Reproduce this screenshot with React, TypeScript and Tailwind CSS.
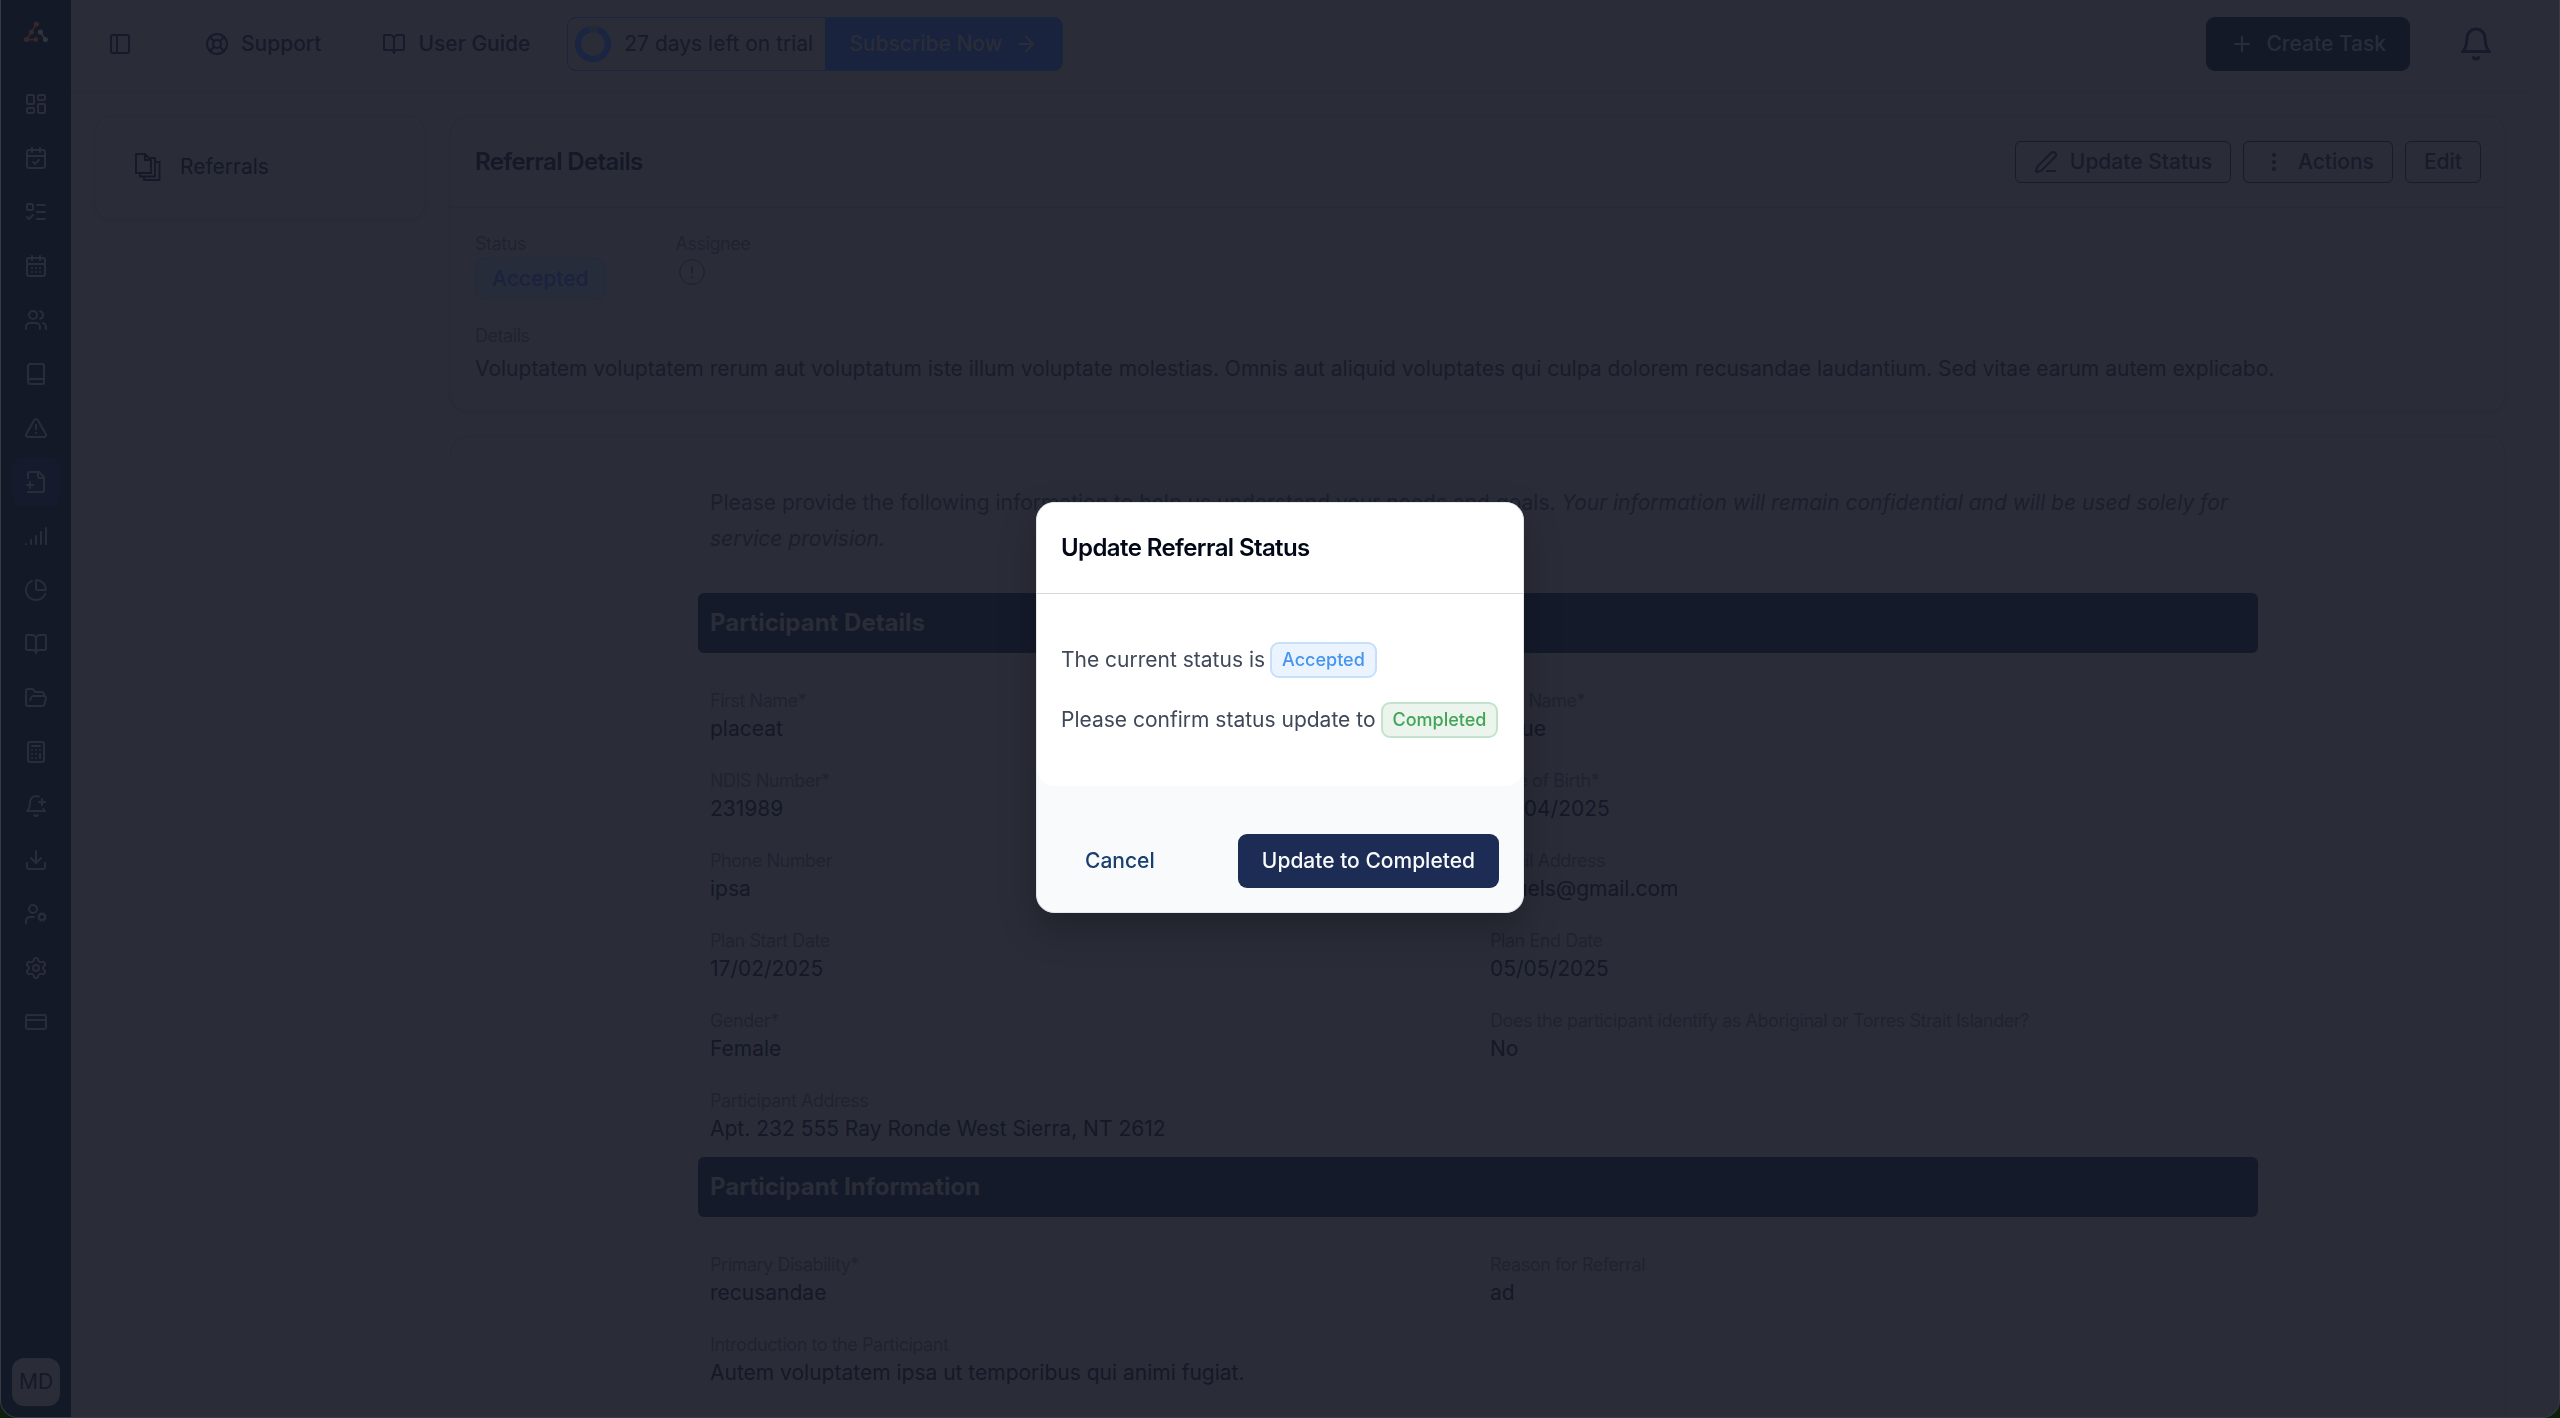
import {
	ArrowRight,
	Book,
	BookOpen,
	Calculator,
	CalendarCheck,
	CalendarDays,
	ChartPie,
	CreditCard,
	Download,
	EllipsisVertical,
	FolderOpen,
	LayoutDashboard,
	LifeBuoy,
	ListTodo,
	PanelLeft,
	PenLine,
	Plus,
	Settings,
	Signal,
	TriangleAlert,
	UserCog,
	Users,
} from "lucide-react";
import type { ReactNode, SVGProps } from "react";

function LineIcon({ children, ...props }: SVGProps<SVGSVGElement>) {
	return (
		<svg
			viewBox="0 0 24 24"
			fill="none"
			stroke="currentColor"
			strokeWidth="2"
			strokeLinecap="round"
			strokeLinejoin="round"
			aria-hidden="true"
			{...props}
		>
			{children}
		</svg>
	);
}

function BellIcon({ className }: { className?: string }) {
	return (
		<LineIcon className={className}>
			<path d="M6 8a6 6 0 0 1 12 0c0 7 3 9 3 9H3s3-2 3-9" />
			<path d="M10.3 21a1.94 1.94 0 0 0 3.4 0" />
		</LineIcon>
	);
}

function BellPlusIcon({ className }: { className?: string }) {
	return (
		<LineIcon className={className}>
			<path d="M19.3 14.8C20.1 16.4 21 17 21 17H3s3-2 3-9c0-3.3 2.7-6 6-6 1 0 1.9.2 2.8.7" />
			<path d="M10.3 21a1.94 1.94 0 0 0 3.4 0" />
			<path d="M15 8h6" />
			<path d="M18 5v6" />
		</LineIcon>
	);
}

function FilePlusIcon({ className }: { className?: string }) {
	return (
		<LineIcon className={className}>
			<path d="M4 22h14a2 2 0 0 0 2-2V7l-5-5H6a2 2 0 0 0-2 2v4" />
			<path d="M14 2v4a2 2 0 0 0 2 2h4" />
			<path d="M3 15h6" />
			<path d="M6 12v6" />
		</LineIcon>
	);
}

function StackedFilesIcon() {
	return (
		<svg
			className="h-7 w-[26px]"
			viewBox="0 0 26 28"
			fill="none"
			stroke="currentColor"
			strokeWidth="1.8"
			aria-hidden="true"
		>
			<path d="M1 1h9l6 6v13H1z" />
			<path d="M10 1v6h6" />
			<path d="M5 20v3.5h15V5h-5" />
			<path d="M9 23.5V27h15.5V9H20" />
		</svg>
	);
}

function Logo() {
	return (
		<svg className="size-6" viewBox="0 0 24 24" aria-hidden="true">
			<g fill="#35282c" stroke="#35282c" strokeWidth="1.6">
				<path d="M12.4 4 7.4 12 2.6 19.6h9" fill="none" />
				<circle cx="12.4" cy="4" r="1.8" />
				<circle cx="7.4" cy="12" r="1.8" />
				<circle cx="2.4" cy="19.5" r="1.8" />
				<circle cx="11.8" cy="19.4" r="1.5" />
			</g>
			<g fill="#30343f" stroke="#30343f" strokeWidth="1.6">
				<path d="m16.4 12 5 7.6" />
				<circle cx="16.4" cy="12" r="1.8" />
				<circle cx="21.4" cy="19.6" r="1.8" />
			</g>
		</svg>
	);
}

const navItems = [
	{ label: "Dashboard", icon: LayoutDashboard },
	{ label: "Roster", icon: CalendarCheck },
	{ label: "Tasks", icon: ListTodo },
	{ label: "Calendar", icon: CalendarDays },
	{ label: "Participants", icon: Users },
	{ label: "Progress notes", icon: Book },
	{ label: "Incidents", icon: TriangleAlert },
	{ label: "Referrals", icon: FilePlusIcon, active: true },
	{ label: "Activity", icon: Signal },
	{ label: "Reports", icon: ChartPie },
	{ label: "Library", icon: BookOpen },
	{ label: "Files", icon: FolderOpen },
	{ label: "Billing", icon: Calculator },
	{ label: "Reminders", icon: BellPlusIcon },
	{ label: "Downloads", icon: Download },
	{ label: "Staff", icon: UserCog },
	{ label: "Settings", icon: Settings },
	{ label: "Subscription", icon: CreditCard },
];

const participantDetails = [
	["First Name*", "placeat"],
	["Last Name*", "atque"],
	["NDIS Number*", "231989"],
	["Date of Birth*", "08/04/2025"],
	["Phone Number", "ipsa"],
	["Email Address", "deuels@gmail.com"],
	["Plan Start Date", "17/02/2025"],
	["Plan End Date", "05/05/2025"],
	["Gender*", "Female"],
	["Does the participant identify as Aboriginal or Torres Strait Islander?", "No"],
];

function Sidebar() {
	return (
		<aside className="flex w-[70px] shrink-0 flex-col items-center bg-[#141928] pt-5 pb-[11px] text-[#2a2d38]">
			<Logo />
			<nav className="mt-9 flex flex-col gap-[6px]">
				{navItems.map(({ label, icon: Icon, active }) => (
					<a
						key={label}
						href="#"
						aria-label={label}
						className={`grid size-12 place-items-center rounded-[9px] ${active ? "bg-[#151a2c]" : ""}`}
					>
						<Icon className="size-6" />
					</a>
				))}
			</nav>
			<button
				type="button"
				className="mt-auto size-12 rounded-xl bg-[#2a2d38] text-[#151928]"
			>
				MD
			</button>
		</aside>
	);
}

function TopBar() {
	return (
		<header className="flex items-center justify-between border-b border-[#282b36] pt-[17px] pr-9 pb-[21px] pl-[37px] text-[#161a2a]">
			<div className="flex items-center gap-[13px]">
				<button type="button" aria-label="Toggle sidebar" className="mr-9">
					<PanelLeft className="size-6" />
				</button>
				<a
					href="#"
					className="flex h-[54px] items-center gap-3 rounded-[9px] border border-[#292c37] px-[23px] font-medium"
				>
					<LifeBuoy className="size-6" />
					Support
				</a>
				<a
					href="#"
					className="flex h-[54px] items-center gap-3 rounded-[9px] border border-[#292c37] px-[23px] font-medium"
				>
					<BookOpen className="size-6" />
					User Guide
				</a>
				<div className="flex h-[54px] overflow-hidden rounded-[9px] border border-[#1a2542]">
					<div className="flex items-center gap-3 pr-3 pl-[6px]">
						<svg className="size-[38px]" viewBox="0 0 38 38" fill="none" aria-hidden="true">
							<circle cx="19" cy="19" r="15" stroke="#242936" strokeWidth="6" />
							<circle
								cx="19"
								cy="19"
								r="15"
								stroke="#1a2542"
								strokeWidth="6"
								strokeDasharray="85 10"
								transform="rotate(-72 19 19)"
							/>
						</svg>
						27 days left on trial
					</div>
					<button
						type="button"
						className="flex items-center gap-3 bg-[#19233d] px-6 font-medium text-[#2a2d38]"
					>
						Subscribe Now
						<ArrowRight className="size-6" />
					</button>
				</div>
			</div>
			<div className="flex items-center gap-12">
				<button
					type="button"
					className="flex h-[54px] items-center gap-3 rounded-[9px] bg-[#141928] px-6 font-medium text-[#2a2d38]"
				>
					<Plus className="size-6" />
					Create Task
				</button>
				<button type="button" aria-label="Notifications">
					<BellIcon className="size-9" />
				</button>
			</div>
		</header>
	);
}

function OutlineButton({ children }: { children: ReactNode }) {
	return (
		<button
			type="button"
			className="flex h-[42px] items-center gap-3 rounded-md border border-[#171b2a] px-[18px] font-medium text-[#171b2a]"
		>
			{children}
		</button>
	);
}

function Label({ children }: { children: ReactNode }) {
	return (
		<div className="text-[18px] leading-6 tracking-tight text-[#1f2330]">{children}</div>
	);
}

function Field({ label, value }: { label: string; value: string }) {
	return (
		<div>
			<Label>{label}</Label>
			<div className="leading-8">{value}</div>
		</div>
	);
}

function SectionHeading({ children }: { children: ReactNode }) {
	return (
		<h2 className="rounded-md bg-[#151a2b] px-3 text-[24px] leading-[60px] font-bold text-[#2a2d38]">
			{children}
		</h2>
	);
}

function DetailsCard() {
	return (
		<section className="rounded-[18px] border border-[#282b36] shadow-[0_1px_3px_rgba(0,0,0,0.04)]">
			<div className="flex items-center justify-between border-b border-[#262a35] p-6">
				<h1 className="text-[24px] font-semibold tracking-tight">Referral Details</h1>
				<div className="flex gap-3">
					<OutlineButton>
						<PenLine className="size-6" />
						Update Status
					</OutlineButton>
					<OutlineButton>
						<EllipsisVertical className="size-6" />
						Actions
					</OutlineButton>
					<OutlineButton>Edit</OutlineButton>
				</div>
			</div>
			<div className="flex flex-col gap-6 p-6 text-[#181c2a]">
				<div className="flex gap-[70px]">
					<div className="flex flex-col gap-[2px]">
						<Label>Status</Label>
						<div className="rounded-[9px] border border-[#262b3a] bg-[#272c3a] px-4 leading-10 font-medium text-[#19233e]">
							Accepted
						</div>
					</div>
					<div className="flex flex-col gap-[3px]">
						<Label>Assignee</Label>
						<svg
							className="ml-[3px] size-[26px] text-[#1d212e]"
							viewBox="0 0 26 26"
							fill="none"
							stroke="currentColor"
							aria-hidden="true"
						>
							<circle cx="13" cy="13" r="12.3" />
							<path d="M13 7.5v7M13 17v2" strokeWidth="1.5" />
						</svg>
					</div>
				</div>
				<div>
					<Label>Details</Label>
					<p className="pt-[3px] leading-9">
						Voluptatem voluptatem rerum aut voluptatum iste illum voluptate molestias.
						Omnis aut aliquid voluptates qui culpa dolorem recusandae laudantium. Sed
						vitae earum autem explicabo.
					</p>
				</div>
			</div>
		</section>
	);
}

function ReferralForm() {
	return (
		<section className="min-h-0 flex-1 overflow-hidden rounded-t-[18px] border-x border-t border-[#282b36] pt-12">
			<div className="mx-auto w-[76%] max-w-[1560px]">
				<p className="mb-9 px-3 leading-9 text-[#1b1f2c]">
					Please provide the following information to help us understand your needs and
					goals.{" "}
					<em>
						Your information will remain confidential and will be used solely for
						service provision.
					</em>
				</p>
				<SectionHeading>Participant Details</SectionHeading>
				<div className="grid grid-cols-2 gap-y-6 pt-9 pb-3 *:px-3">
					{participantDetails.map(([label, value]) => (
						<Field key={label} label={label} value={value} />
					))}
					<Field
						label="Participant Address"
						value="Apt. 232 555 Ray Ronde West Sierra, NT 2612"
					/>
				</div>
				<SectionHeading>Participant Information</SectionHeading>
				<div className="grid grid-cols-2 gap-y-6 pt-9 *:px-3">
					<Field label="Primary Disability*" value="recusandae" />
					<Field label="Reason for Referral" value="ad" />
					<div className="col-span-2">
						<Field
							label="Introduction to the Participant"
							value="Autem voluptatem ipsa ut temporibus qui animi fugiat."
						/>
					</div>
				</div>
			</div>
		</section>
	);
}

function StatusDialog() {
	return (
		<div
			role="dialog"
			aria-modal="true"
			aria-labelledby="dialog-title"
			className="w-[488px] overflow-hidden rounded-[18px] border border-[#e2e8f0] bg-[#f8fafc] text-[#3f4859] shadow-[0_16px_36px_rgba(0,0,0,0.25)]"
		>
			<div className="rounded-b-[18px] bg-white">
				<h2
					id="dialog-title"
					className="border-b border-[#d4d7de] px-6 py-6 text-[24px] leading-[42px] font-semibold tracking-tight text-[#020817]"
				>
					Update Referral Status
				</h2>
				<div className="flex flex-col gap-6 px-6 py-12 leading-9 whitespace-nowrap">
					<div className="flex items-center gap-[5px]">
						The current status is
						<span className="rounded-[9px] border-2 border-[#c6dffa] bg-[#ebf4fe] px-[10px] text-[18px] leading-8 font-medium text-[#4594ee]">
							Accepted
						</span>
					</div>
					<div className="flex items-center gap-[5px]">
						Please confirm status update to
						<span className="rounded-[9px] border-2 border-[#c5e3ca] bg-[#ebf5ed] px-[10px] text-[18px] leading-8 font-medium text-[#42a556]">
							Completed
						</span>
					</div>
				</div>
			</div>
			<div className="flex justify-between px-6 pt-12 pb-6">
				<button type="button" className="h-[54px] px-6 font-medium text-[#183f70]">
					Cancel
				</button>
				<button
					type="button"
					className="h-[54px] rounded-[9px] bg-[#1c2c54] px-6 font-medium text-[#f8fafc]"
				>
					Update to Completed
				</button>
			</div>
		</div>
	);
}

export default function App() {
	return (
		<div className="h-screen bg-[#10200f] font-['Inter',sans-serif] text-[21px] leading-8 text-[#141827]">
			<div className="flex h-full overflow-hidden rounded-b-[18px] border-x border-b border-[#383a45] bg-[#2a2d38]">
				<Sidebar />
				<div className="flex min-w-0 flex-1 flex-col pr-[29px]">
					<TopBar />
					<main className="flex min-h-0 flex-1 gap-6 pt-[23px] pr-6 pl-[23px]">
						<aside className="h-[104px] w-[332px] shrink-0 rounded-[18px] border border-[#282b36] px-10 pt-[34px] shadow-[0_1px_3px_rgba(0,0,0,0.04)]">
							<a href="#" className="flex items-center gap-[19px]">
								<StackedFilesIcon />
								Referrals
							</a>
						</aside>
						<div className="flex min-w-0 flex-1 flex-col gap-6">
							<DetailsCard />
							<ReferralForm />
						</div>
					</main>
				</div>
			</div>
			<div className="pointer-events-none fixed inset-0 flex items-center justify-center pb-[3px] *:pointer-events-auto">
				<StatusDialog />
			</div>
		</div>
	);
}
